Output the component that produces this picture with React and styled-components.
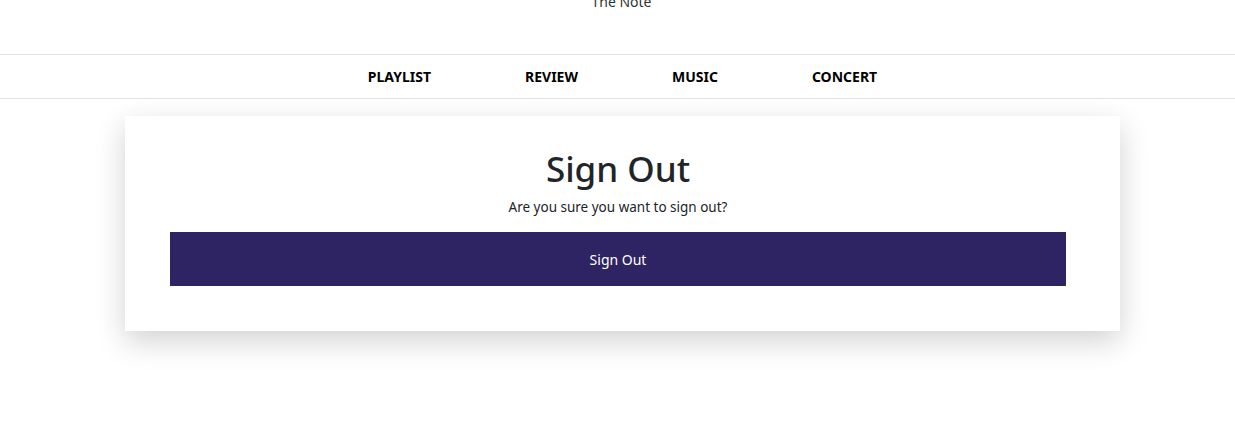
import React from 'react'
import styled, { createGlobalStyle } from 'styled-components'

const Global = createGlobalStyle`
    body {
        margin: 0;
        background: #fff;
        font-family: "Noto Sans", "Open Sans", sans-serif;
        color: #212529;
    }
`

const Page = styled.div`
    min-height: 442px;
    padding-bottom: 60px;
    box-sizing: border-box;
`

const Header = styled.header`
    height: 54px;
    border-bottom: 1px solid #e3e3e3;
    display: flex;
    justify-content: center;
    overflow: hidden;
`

const Brand = styled.div`
    font-size: 14px;
    color: #333;
    margin-top: -8px;
    margin-left: 8px;
`

const Nav = styled.nav`
    height: 43px;
    border-bottom: 1px solid #e3e3e3;
    display: flex;
    justify-content: center;
    align-items: center;
    gap: 94px;
    padding-left: 10px;
`

const NavLink = styled.a`
    font-size: 14px;
    font-weight: 700;
    color: #000;
    text-decoration: none;
    cursor: pointer;
`

const Card = styled.section`
    width: 995px;
    box-sizing: border-box;
    margin: 17px 0 0 125px;
    padding: 30px 54px 45px 45px;
    background: #fff;
    box-shadow: 0 10px 28px rgba(0, 0, 0, 0.18);
    display: flex;
    flex-direction: column;
    align-items: center;
`

const Title = styled.h1`
    margin: 0;
    font-size: 35px;
    font-weight: 500;
    line-height: 46px;
    color: #212529;
`

const Text = styled.p`
    margin: 5px 0 0;
    font-size: 13.5px;
    line-height: 20px;
    color: #212529;
`

const Button = styled.button`
    margin-top: 15px;
    width: 100%;
    height: 54px;
    border: none;
    background: #2e2363;
    color: #fff;
    font-family: inherit;
    font-size: 14px;
    cursor: pointer;
`

export default function App() {
    return (
        <Page>
            <Global />
            <Header>
                <Brand>The Note</Brand>
            </Header>
            <Nav>
                <NavLink>PLAYLIST</NavLink>
                <NavLink>REVIEW</NavLink>
                <NavLink>MUSIC</NavLink>
                <NavLink>CONCERT</NavLink>
            </Nav>
            <Card>
                <Title>Sign Out</Title>
                <Text>Are you sure you want to sign out?</Text>
                <Button>Sign Out</Button>
            </Card>
        </Page>
    )
}
